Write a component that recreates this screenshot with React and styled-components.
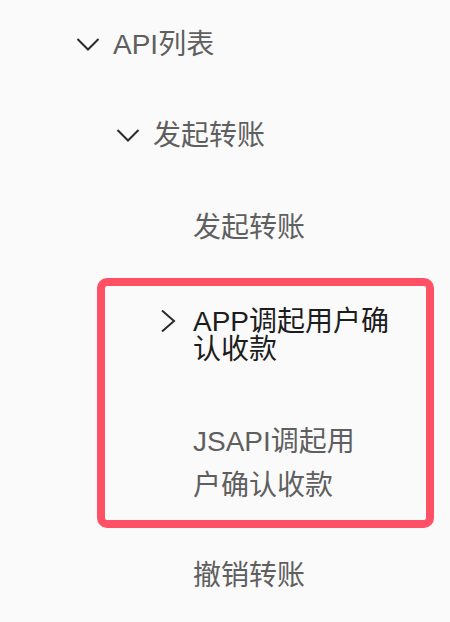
import styled, {createGlobalStyle} from 'styled-components';

const GlobalStyle = createGlobalStyle`
  body {
    margin: 0;
    background: #fafafa;
    font-family: "Liberation Sans", "Noto Sans CJK SC", sans-serif;
  }
`;

const Menu = styled.div`
  width: 450px;
  height: 622px;
  overflow: hidden;
  display: flex;
  flex-direction: column;
`;

const Item = styled.div`
  display: flex;
  align-items: flex-start;
  margin-top: ${(p) => p.$top}px;
  padding-left: ${(p) => p.$indent}px;
  color: ${(p) => (p.$active ? '#1d1d1d' : '#5f5f5f')};
  font-size: 28px;
  line-height: ${(p) => p.$lh}px;
`;

const IconSlot = styled.span`
  flex: none;
  width: 24px;
  height: ${(p) => p.$lh}px;
  margin-right: 13px;
  display: flex;
  align-items: center;
  justify-content: center;
  color: #2a2a2a;
`;

const Label = styled.span`
  max-width: ${(p) => p.$max || 300}px;
`;

const Highlight = styled.div`
  margin: 28px 16px 0 97px;
  padding: 22px 0 12px;
  border: 8px solid #ff5066;
  border-radius: 10px;
`;

const Chevron = ({dir}) => (
  <svg width="24" height="24" viewBox="0 0 24 24" fill="none" stroke="currentColor" strokeWidth="2">
    {dir === 'down' ? (
      <polyline points="1.5,6 12,16.5 22.5,6" />
    ) : (
      <polyline points="6,0.5 18,11 6,21.5" />
    )}
  </svg>
);

const Row = ({indent, top = 0, lh = 44, icon, active, max, children}) => (
  <Item $indent={indent} $top={top} $lh={lh} $active={active}>
    <IconSlot $lh={lh}>{icon && <Chevron dir={icon} />}</IconSlot>
    <Label $max={max}>{children}</Label>
  </Item>
);

export default function App() {
  return (
    <Menu>
      <GlobalStyle />
      <Row indent={76} top={23} icon="down">API列表</Row>
      <Row indent={116} top={47} icon="down">发起转账</Row>
      <Row indent={156} top={48}>发起转账</Row>
      <Highlight>
        <Row indent={51} lh={28} icon="right" active max={212}>
          APP调起用户确认收款
        </Row>
        <Row indent={51} top={56} max={176}>
          JSAPI调起用户确认收款
        </Row>
      </Highlight>
      <Row indent={156} top={26}>撤销转账</Row>
    </Menu>
  );
}
